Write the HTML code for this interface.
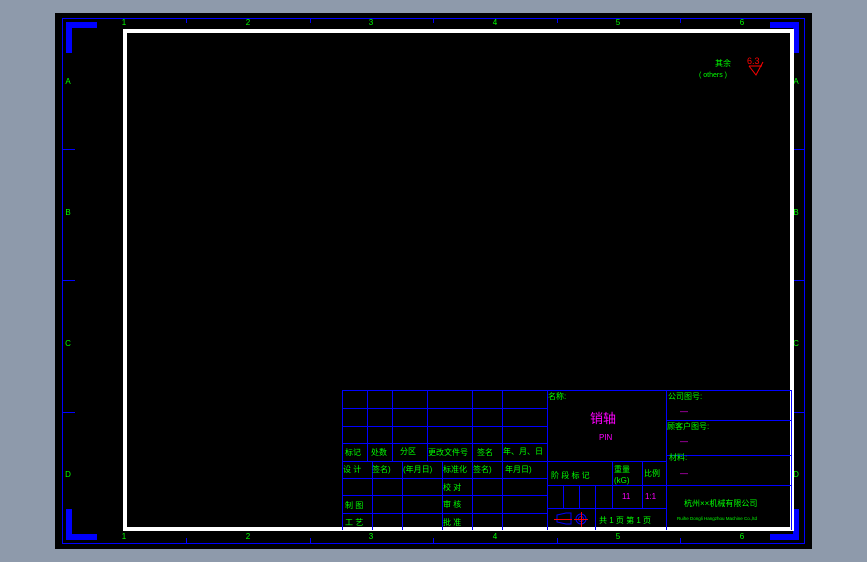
<!DOCTYPE html>
<html><head><meta charset="utf-8"><style>
html,body{margin:0;padding:0;background:#8e9aab;width:867px;height:562px;overflow:hidden}
svg{display:block}
text{font-family:"Liberation Sans","Noto Sans CJK SC",sans-serif}
</style></head><body>
<svg width="867" height="562" viewBox="0 0 867 562" xmlns="http://www.w3.org/2000/svg">
<rect x="0" y="0" width="867" height="562" fill="#8e9aab"/>
<rect x="55" y="13" width="757" height="536" fill="#000"/>
<rect x="62.5" y="18.5" width="742" height="525" fill="none" stroke="#0000ff" stroke-width="1"/>
<!-- corner markers -->
<g fill="#0000ff">
<rect x="66" y="22" width="31" height="6"/><rect x="66" y="22" width="6" height="31"/>
<rect x="770" y="22" width="29" height="6"/><rect x="793" y="22" width="6" height="31"/>
<rect x="66" y="534" width="31" height="6"/><rect x="66" y="509" width="6" height="31"/>
<rect x="770" y="534" width="29" height="6"/><rect x="793" y="509" width="6" height="31"/>
</g>
<!-- ticks -->
<g stroke="#0000ff" stroke-width="1">
<line x1="186.5" y1="18" x2="186.5" y2="23"/><line x1="310.5" y1="18" x2="310.5" y2="23"/><line x1="433.5" y1="18" x2="433.5" y2="23"/><line x1="557.5" y1="18" x2="557.5" y2="23"/><line x1="680.5" y1="18" x2="680.5" y2="23"/>
<line x1="186.5" y1="538" x2="186.5" y2="543"/><line x1="310.5" y1="538" x2="310.5" y2="543"/><line x1="433.5" y1="538" x2="433.5" y2="543"/><line x1="557.5" y1="538" x2="557.5" y2="543"/><line x1="680.5" y1="538" x2="680.5" y2="543"/>
<line x1="62" y1="149.5" x2="75" y2="149.5"/><line x1="62" y1="280.5" x2="75" y2="280.5"/><line x1="62" y1="412.5" x2="75" y2="412.5"/>
<line x1="792" y1="149.5" x2="805" y2="149.5"/><line x1="792" y1="280.5" x2="805" y2="280.5"/><line x1="792" y1="412.5" x2="805" y2="412.5"/>
</g>
<g fill="#00ff00" font-size="8" text-anchor="middle">
<text x="124" y="25">1</text><text x="248" y="25">2</text><text x="371" y="25">3</text><text x="495" y="25">4</text><text x="618" y="25">5</text><text x="742" y="25">6</text>
<text x="124" y="539">1</text><text x="248" y="539">2</text><text x="371" y="539">3</text><text x="495" y="539">4</text><text x="618" y="539">5</text><text x="742" y="539">6</text>
<text x="68" y="84">A</text><text x="68" y="215">B</text><text x="68" y="346">C</text><text x="68" y="477">D</text>
<text x="796" y="84">A</text><text x="796" y="215">B</text><text x="796" y="346">C</text><text x="796" y="477">D</text>
</g>
<!-- white frame -->
<rect x="125" y="31" width="667" height="498" fill="none" stroke="#fff" stroke-width="4"/>
<!-- roughness -->
<text x="715" y="66" fill="#00ff00" font-size="8">其余</text>
<text x="699" y="77" fill="#00ff00" font-size="7">( others )</text>
<text x="747" y="64" fill="#ff0000" font-size="9">6.3</text>
<polyline points="749,66 756,75 763,62" fill="none" stroke="#f00" stroke-width="1"/>
<line x1="749" y1="66" x2="762" y2="66" stroke="#f00"/>
<!-- title block -->
<g stroke="#0000ff" stroke-width="1" fill="none">
<line x1="342" y1="390.5" x2="791" y2="390.5"/>
<line x1="342" y1="408.5" x2="547" y2="408.5"/>
<line x1="342" y1="426.5" x2="547" y2="426.5"/>
<line x1="342" y1="443.5" x2="547" y2="443.5"/>
<line x1="342" y1="461.5" x2="666" y2="461.5"/>
<line x1="342" y1="478.5" x2="547" y2="478.5"/>
<line x1="342" y1="495.5" x2="547" y2="495.5"/>
<line x1="342" y1="513.5" x2="547" y2="513.5"/>
<line x1="547" y1="485.5" x2="791" y2="485.5"/>
<line x1="547" y1="508.5" x2="666" y2="508.5"/>
<line x1="666" y1="420.5" x2="791" y2="420.5"/>
<line x1="666" y1="455.5" x2="791" y2="455.5"/>
<line x1="342.5" y1="390" x2="342.5" y2="530"/>
<line x1="367.5" y1="390" x2="367.5" y2="461"/>
<line x1="392.5" y1="390" x2="392.5" y2="461"/>
<line x1="427.5" y1="390" x2="427.5" y2="461"/>
<line x1="472.5" y1="390" x2="472.5" y2="530"/>
<line x1="502.5" y1="390" x2="502.5" y2="530"/>
<line x1="547.5" y1="390" x2="547.5" y2="530"/>
<line x1="666.5" y1="390" x2="666.5" y2="530"/>
<line x1="372.5" y1="461" x2="372.5" y2="530"/>
<line x1="402.5" y1="461" x2="402.5" y2="530"/>
<line x1="442.5" y1="461" x2="442.5" y2="530"/>
<line x1="612.5" y1="461" x2="612.5" y2="508"/>
<line x1="642.5" y1="461" x2="642.5" y2="508"/>
<line x1="563.5" y1="485" x2="563.5" y2="508"/>
<line x1="579.5" y1="485" x2="579.5" y2="508"/>
<line x1="595.5" y1="485" x2="595.5" y2="530"/>
<line x1="791.5" y1="390" x2="791.5" y2="530"/>
<!-- projection symbol -->
<path d="M557,515 L566,513 L571,513 L571,524 L566,524 L557,522 Z"/>
<circle cx="581" cy="519" r="5"/><circle cx="581" cy="519" r="2.5"/>
</g>
<g stroke="#f00" stroke-width="1"><line x1="554" y1="519.5" x2="572" y2="519.5"/><line x1="574" y1="519.5" x2="588" y2="519.5"/><line x1="581.5" y1="512" x2="581.5" y2="527"/></g>
<g fill="#00ff00" font-size="8">
<text x="345" y="455">标记</text><text x="371" y="455">处数</text><text x="400" y="454">分区</text><text x="428" y="455">更改文件号</text><text x="477" y="455">签名</text><text x="503" y="454">年、月、日</text>
<text x="343" y="472">设  计</text><text x="372" y="472">签名)</text><text x="403" y="472">(年月日)</text><text x="443" y="472">标准化</text><text x="473" y="472">签名)</text><text x="505" y="472">年月日)</text>
<text x="443" y="490">校  对</text><text x="345" y="508">制  图</text><text x="443" y="507">审  核</text><text x="345" y="525">工  艺</text><text x="443" y="525">批  准</text>
<text x="548" y="399">名称:</text>
<text x="551" y="478">阶 段 标 记</text><text x="614" y="472">重量</text><text x="614" y="483">(kG)</text><text x="644" y="476">比例</text>
<text x="599" y="523">共 1 页  第 1 页</text>
<text x="668" y="399">公司图号:</text><text x="667" y="429">顾客户图号:</text><text x="669" y="460">材料:</text>
<text x="684" y="506">杭州××机械有限公司</text>
<text x="677" y="520" font-size="4.5">Ruihe Dongli Hangzhou Machine Co.,ltd</text>
</g>
<g fill="#ff00ff">
<text x="590" y="423" font-size="13">销轴</text>
<text x="599" y="440" font-size="8">PIN</text>
<text x="622" y="499" font-size="8">11</text>
<text x="645" y="499" font-size="8">1:1</text>
<text x="680" y="414" font-size="8">—</text>
<text x="680" y="444" font-size="8">—</text>
<text x="680" y="476" font-size="8">—</text>
</g>
</svg>
</body></html>
